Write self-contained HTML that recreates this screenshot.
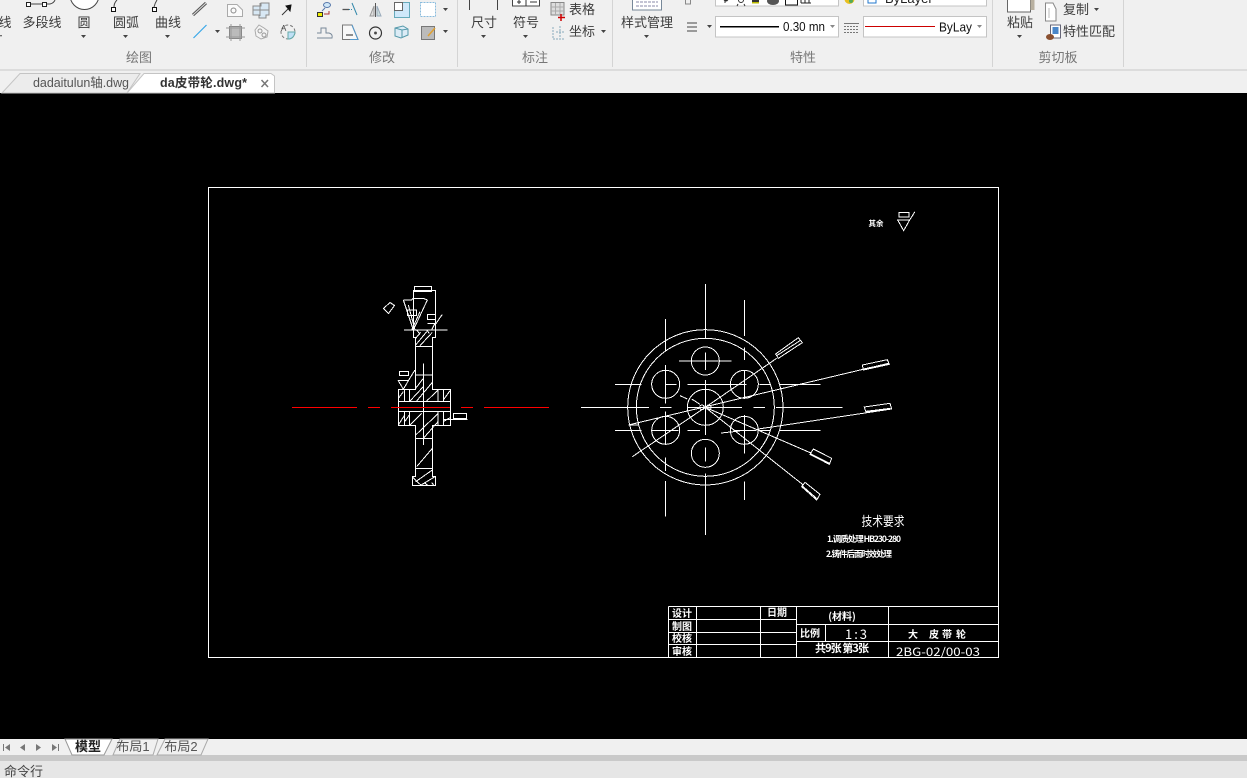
<!DOCTYPE html>
<html><head><meta charset="utf-8"><style>
html,body{margin:0;padding:0;background:#000;width:1247px;height:778px;overflow:hidden}
svg{display:block;position:absolute;left:0;top:0}
text{font-family:"Liberation Sans","Noto Sans CJK SC",sans-serif}
.l{font-size:13px;fill:#3c3c3c;text-anchor:middle}
.g{font-size:13px;fill:#777;text-anchor:middle}
.c{font-family:"Noto Sans CJK SC","Liberation Sans",sans-serif;fill:#fff;text-anchor:middle;font-weight:700}
</style></head><body>
<svg width="1247" height="778" viewBox="0 0 1247 778" xmlns="http://www.w3.org/2000/svg">
<rect width="1247" height="778" fill="#000"/>
<rect width="1247" height="70" fill="#f0f0f0"/>
<rect y="69" width="1247" height="2" fill="#dcdcdc"/>
<rect y="71" width="1247" height="22" fill="#f0f0f0"/>
<g fill="#d4d4d4"><rect x="306" y="0" width="1" height="67"/><rect x="457" y="0" width="1" height="67"/><rect x="612" y="0" width="1" height="67"/><rect x="992" y="0" width="1" height="67"/><rect x="1123" y="0" width="1" height="67"/></g>

<!-- labels -->
<text class="l" x="5" y="27">线</text><text class="l" x="42" y="27">多段线</text><text class="l" x="84" y="27">圆</text><text class="l" x="126" y="27">圆弧</text><text class="l" x="168" y="27">曲线</text>
<text class="l" x="484" y="27">尺寸</text><text class="l" x="526" y="27">符号</text><text class="l" x="582" y="14">表格</text><text class="l" x="582" y="36">坐标</text><text class="l" x="647" y="27">样式管理</text>
<text class="l" x="1020" y="27">粘贴</text><text class="l" x="1076" y="14">复制</text><text class="l" x="1089" y="36">特性匹配</text>
<text class="g" x="139" y="62">绘图</text><text class="g" x="382" y="62">修改</text><text class="g" x="535" y="62">标注</text><text class="g" x="803" y="62">特性</text><text class="g" x="1058" y="62">剪切板</text>

<!-- dropdown arrows -->
<g fill="#444"><path d="M81 35h5l-2.500 3z"/><path d="M123 35h5l-2.500 3z"/><path d="M165 35h5l-2.500 3z"/><path d="M215 30h5l-2.500 3z"/><path d="M443 8h5l-2.500 3z"/><path d="M443 30h5l-2.500 3z"/><path d="M481 35h5l-2.500 3z"/><path d="M523 35h5l-2.500 3z"/><path d="M601 30h5l-2.500 3z"/><path d="M644 35h5l-2.500 3z"/><path d="M707 25h5l-2.500 3z"/><path d="M1017 35h5l-2.500 3z"/><path d="M1094 8h5l-2.500 3z"/><path d="M0 35h2l-1 2z"/></g>

<!-- draw icons -->
<g fill="none" stroke="#444">
<path d="M30 4H42M46 4H50Q54 3 55 0"/><rect x="26.500" y="2.500" width="4" height="4" fill="#fff" stroke="#222"/><rect x="42.500" y="2.500" width="4" height="4" fill="#fff" stroke="#222"/>
<circle cx="84.500" cy="-5" r="14.500" fill="#fff"/>
<path d="M114 7Q114 3 117 0M154 7Q155 3 157 0"/><rect x="111.500" y="7.500" width="4" height="4" fill="#fff" stroke="#111"/><rect x="152.500" y="7.500" width="4" height="4" fill="#fff" stroke="#111"/>
<path d="M193 15L206 3" stroke="#555" stroke-width="3"/><path d="M193 15L206 3" stroke="#ddd" stroke-width="1"/>
<path d="M193.500 38L206.500 25" stroke="#38a8e8" stroke-width="1.200"/>
<path d="M227.500 4.500H237L242.500 10V16.500H227.500Z" stroke="#aaa" fill="#fafafa"/><circle cx="233.500" cy="10.500" r="2.500" stroke="#888"/>
<path d="M253 6H261V3H269V15H266V18H259V15H253Z" stroke="#8a8a8a" fill="#d8e8f4"/><path d="M253 10H269M260 3V16" stroke="#8a8a8a"/>
<path d="M282 15L288 9" stroke="#333"/><path d="M286 6L291 5L290 11Z" fill="#111" stroke="#111"/>
<rect x="229.500" y="26.500" width="12" height="12" fill="#bbb" stroke="#888"/><path d="M226 28H245M226 37H245M231 24V41M240 24V41" stroke="#999"/>
<path d="M255 30L259 25L264 28L268 31L267 37L261 39L256 36Z" stroke="#aaa" fill="#f4f4f4"/><circle cx="260" cy="31" r="2" stroke="#999"/><circle cx="264" cy="35" r="2" stroke="#999"/>
<circle cx="288" cy="32" r="7" stroke="#777" stroke-dasharray="3 2"/><path d="M288 32H295Q294 39 288 39Z" fill="#bfe0f5" stroke="#6aa"/>
</g>
<text x="281" y="31" font-size="8" fill="#444">A</text>

<!-- modify icons -->
<g fill="none" stroke="#555">
<rect x="317.500" y="12.500" width="5" height="4" fill="#ee0" stroke="#333"/><ellipse cx="327" cy="5" rx="3.500" ry="2.500" fill="#cfe6f7" stroke="#57a"/><path d="M324 14H329V11" stroke="#a33"/><path d="M322 11L325 8" stroke="#57a"/>
<path d="M342.500 9.500H349" stroke="#555" stroke-width="1.300"/><path d="M349 9.500H353" stroke="#38a" stroke-dasharray="1 1"/><path d="M352 3L357 15" stroke="#38a"/>
<path d="M375.500 3V17" stroke="#555"/><path d="M374 6L370 16H374Z" fill="#ddd" stroke="#999"/><path d="M377 6L381 16H377Z" fill="#cdd" stroke="#9ab"/>
<rect x="394.500" y="2.500" width="15" height="15" fill="#cfe8fa" stroke="#6ab"/><rect x="394.500" y="2.500" width="8" height="8" fill="#fff" stroke="#666"/>
<rect x="420.500" y="2.500" width="15" height="14" fill="#fff" stroke="#8bd" stroke-dasharray="2 1"/>
<path d="M317 38H332Q333 34 329 33H326V28H321V33H317" stroke="#789"/>
<path d="M342.500 39.500V25H352L358 39.500Z" fill="#f8f8f8" stroke="#777"/><path d="M346 35H353" stroke="#222"/><path d="M352 25L358 39.500H350" stroke="#59c"/>
<circle cx="375.500" cy="33" r="6" stroke="#333" stroke-width="1.200"/><circle cx="375.500" cy="33" r="1" fill="#333"/>
<path d="M395 28L403 26L408 29V35L401 38L395 36Z" stroke="#59a" fill="#dcecf6"/><path d="M402 30V37M395 28L402 30L408 29" stroke="#59a"/>
<rect x="421.500" y="26.500" width="13" height="13" fill="#bbb" stroke="#777"/><path d="M428 36L435 28" stroke="#e0a030" stroke-width="1.500"/>
</g>

<!-- annotation icons -->
<g fill="none" stroke="#444">
<path d="M469.500 0V10M497.500 0V10"/>
<rect x="512.500" y="-3" width="27" height="9" fill="#fff"/><path d="M526 -3V6M519 0V4M517 2H521M530 2H537" stroke="#333"/>
<rect x="551" y="2.500" width="13" height="12.500" fill="#ddd" stroke="#888"/><path d="M551 7H564M551 11H564M555.500 3V15M560 3V15" stroke="#aaa"/><path d="M561 14V21M558 17.500H565" stroke="#c00" stroke-width="1.500"/>
<path d="M553 27V39M553 39H565M556 32H564M560 26V38" stroke="#8ab" stroke-dasharray="2 1"/>
<rect x="632.500" y="-6" width="29" height="16" fill="#fff" stroke="#789"/><path d="M636 2H658M636 6H658" stroke="#88a" stroke-dasharray="3 1"/>
<rect x="685.500" y="-1" width="5" height="5" stroke="#888"/>
<path d="M687 23H697M687 27H697M687 31H697" stroke="#444"/>
<rect x="844" y="23" width="15" height="1" fill="#777" stroke="none"/><path d="M844 26.500H859M844 29.500H859M844 32.500H859" stroke="#777" stroke-dasharray="2 1"/>
</g>

<!-- property boxes -->
<g fill="#fff" stroke="#c4c4c4"><rect x="715.500" y="-8" width="123" height="14"/><rect x="863.500" y="-8" width="123" height="14"/><rect x="715.500" y="16.500" width="123" height="20.500"/><rect x="863.500" y="16.500" width="123" height="20.500"/></g>
<rect x="720" y="26" width="59" height="1.500" fill="#000"/><rect x="865" y="26" width="70" height="1" fill="#c00"/>
<text x="783" y="31" font-size="13" fill="#111" textLength="42" lengthAdjust="spacingAndGlyphs">0.30 mn</text>
<text x="939" y="31.500" font-size="13" fill="#111" textLength="33" lengthAdjust="spacingAndGlyphs">ByLay</text>
<g fill="#888"><path d="M830 25h5l-2.500 3z"/><path d="M977 25h5l-2.500 3z"/></g>
<g stroke="#333" fill="none"><path d="M725 -1V3"/><path d="M726 1a2 2 0 1 0-.1 0z" fill="#222"/><circle cx="741" cy="0" r="2.500"/><path d="M738 4L737 6M744 4L745 6"/></g>
<rect x="752" y="-1" width="7" height="3" fill="#333"/><rect x="752" y="2" width="7" height="1.500" fill="#bb0"/>
<ellipse cx="773" cy="1" rx="6" ry="4" fill="#555"/><rect x="785.500" y="-3" width="12" height="8" fill="#fff" stroke="#111"/>
<path d="M801 3V0M805 3V0M809 3V0M801 3H811" stroke="#222" fill="none"/>
<circle cx="849.500" cy="-1" r="5" fill="#e8c020"/><circle cx="851" cy="1" r="2" fill="#5a5"/>
<rect x="868" y="-3" width="8" height="6" fill="#fff" stroke="#27c"/>
<text x="885" y="3" font-size="13" fill="#222">ByLayer</text>

<!-- clipboard icons -->
<rect x="1007.500" y="-5" width="23" height="17" fill="#fff" stroke="#666"/><rect x="1030.500" y="-2" width="4" height="12" fill="#b8b0a0"/>
<path d="M1045.500 5.500V21H1056V9L1053 3H1045.500Z" fill="#fff" stroke="#888"/><path d="M1049 8V18" stroke="#bbb"/>
<rect x="1050.500" y="25" width="10" height="13" fill="#fff" stroke="#667"/><rect x="1052.500" y="27" width="6" height="7" fill="#4a86c8"/><ellipse cx="1050" cy="37" rx="4" ry="3" fill="#8a5030"/>

<!-- doc tabs -->
<path d="M2 93L20 73.500H140L127 93Z" fill="#ececec" stroke="#c4c4c4"/>
<path d="M127 93L144 73.500H271L274.500 76V93Z" fill="#fff" stroke="#c4c4c4"/>
<text x="33" y="87" font-size="12.500" fill="#555" textLength="96" lengthAdjust="spacing">dadaitulun轴.dwg</text>
<text x="160" y="87" font-size="12.500" font-weight="700" fill="#333" textLength="87" lengthAdjust="spacing">da皮带轮.dwg*</text>
<path d="M261.500 80L268 87M268 80L261.500 87" stroke="#777" stroke-width="1.500"/>

<!-- bottom -->
<rect y="739" width="1247" height="16" fill="#f0f0f0"/>
<rect y="755" width="1247" height="6" fill="#c9c9c9"/>
<rect y="761" width="1247" height="17" fill="#e6e6e6"/>
<g fill="#777"><rect x="3" y="744" width="1" height="7"/><path d="M10 744v7l-5-3.500z"/><path d="M25 744v7l-5-3.500z"/><path d="M36 744v7l5-3.500z"/><path d="M52 744v7l5-3.500z"/><rect x="58" y="744" width="1" height="7"/></g>
<path d="M65 739L72 755H104L112 739Z" fill="#fff" stroke="#999"/>
<path d="M113 755L120 739H150L158 739L153 755Z" fill="#f0f0f0" stroke="#aaa"/>
<path d="M157 755L165 739H208L201 755Z" fill="#f0f0f0" stroke="#aaa"/>
<text class="l" x="88" y="751" font-weight="700" style="fill:#222">模型</text><text class="l" x="133" y="751" style="fill:#555">布局1</text><text class="l" x="181" y="751" style="fill:#555">布局2</text>
<text x="4" y="776" font-size="13" fill="#444">命令行</text>

<!-- drawing frame -->
<g fill="none" stroke="#fff" shape-rendering="crispEdges">
<rect x="208.500" y="187.500" width="790" height="470"/>
<path d="M668.500 606.500V657M668.500 606.500H998M668 619.500H796M668 632.500H796M668 644.500H796M696.500 606.500V657M760.500 606.500V657M796.500 606.500V657M888.500 606.500V657M796 624.500H998M796 641.500H998M825.500 624.500V641.500"/>
</g>
<g fill="#fff" text-anchor="middle">
<text class="c" x="682" y="617" font-size="10">设计</text><text class="c" x="682" y="630" font-size="10">制图</text><text class="c" x="682" y="642" font-size="10">校核</text><text class="c" x="682" y="655" font-size="10">审核</text>
<text class="c" x="777" y="616" font-size="10">日期</text><text class="c" x="842" y="620" font-size="10">(材料)</text><text class="c" x="810" y="637" font-size="10">比例</text>
<text class="c" x="856" y="639" font-size="13" style="font-weight:400" textLength="22" lengthAdjust="spacing">1:3</text>
<text class="c" x="913 934 947 961" y="638" font-size="10" text-anchor="middle">大皮带轮</text>
<text class="c" x="842" y="652" font-size="11" textLength="54" lengthAdjust="spacing">共9张 第3张</text>
<text class="c" x="938" y="656" font-size="11.500" style="font-weight:400" textLength="84" lengthAdjust="spacingAndGlyphs">2BG-02/00-03</text>
<text class="c" x="883" y="526" font-size="13" style="font-weight:400" textLength="43" lengthAdjust="spacingAndGlyphs">技术要求</text>
<text class="c" x="864" y="542" font-size="8.500" textLength="74" lengthAdjust="spacing">1.调质处理 HB230-280</text>
<text class="c" x="859" y="557" font-size="8.500" textLength="66" lengthAdjust="spacing">2.铸件后面时效处理</text>
<text class="c" x="876" y="226" font-size="7.500">其余</text>
</g>
<g fill="none" stroke="#fff" shape-rendering="crispEdges" transform="translate(850 200) scale(.33333)" stroke-width="3">
<rect x="147" y="37" width="30" height="14"/><path d="M143 60H179L161 92ZM179 60L195 35"/>
</g>

<!-- left view -->
<g fill="none" stroke="#fff" stroke-width="3" shape-rendering="crispEdges" transform="translate(370 275) scale(.33333)">
<path d="M130 47H196V187H187V343H242V452H187V605H197V632H127V605H137V452H85V343H137V187H130Z"/>
<rect x="133" y="35" width="52" height="15"/>
<path d="M137 215H187M137 300H187M137 490H187M137 580H187M137 165H187M85 380H242M85 410H242M160 265V510"/>
<path d="M100 75L130 165L172 75M100 75H125L130 70H160L172 75M115 90L135 165M150 110L125 165"/>
<rect x="112" y="105" width="28" height="17"/><rect x="172" y="118" width="24" height="15"/>
<path d="M195 150L217 118M172 145H195L185 165M102 165H233"/>
<path d="M137 210L170 170M150 212L187 172M137 190L152 172"/>
<rect x="88" y="289" width="28" height="12"/><path d="M85 317H115L100 343ZM115 317L135 285"/>
<rect x="250" y="415" width="40" height="15"/><path d="M220 433H293"/>
<path d="M104 343V380M118 343V380M204 343V380M220 343V380M104 410V452M118 410V452M204 410V452M220 410V452"/>
<path d="M85 370L100 350M120 378L160 335M140 378L187 322M137 340L160 310M170 378L204 345M220 375L240 347"/>
<path d="M85 450L104 420M104 440L118 420M120 450L155 415M137 480L205 415M160 490L204 440M220 440L240 428M140 575L187 520M137 620L187 585M150 632L195 605"/>
<path d="M127 605L137 615L147 625L155 632M165 625L175 632M185 622L192 632M140 165L150 178M170 165L178 175"/>
</g>
<g fill="none" stroke="#fff" shape-rendering="crispEdges"><path d="M383.500 308.500L390 302.500L394.500 305.500L388.500 313.500Z"/></g>
<g fill="#f00"><rect x="292" y="407" width="65" height="1"/><rect x="368" y="407" width="12" height="1"/><rect x="391" y="407" width="59" height="1"/><rect x="461" y="407" width="12" height="1"/><rect x="484" y="407" width="65" height="1"/></g>

<!-- right view -->
<g fill="none" stroke="#fff" stroke-width="3" transform="translate(600 275) scale(.33333)" shape-rendering="crispEdges">
<circle cx="316" cy="397" r="233"/><circle cx="316" cy="397" r="207"/><circle cx="316" cy="397" r="54"/>
<circle cx="316" cy="258" r="42"/><circle cx="197" cy="328" r="42"/><circle cx="433" cy="328" r="42"/><circle cx="197" cy="466" r="42"/><circle cx="433" cy="466" r="42"/><circle cx="316" cy="535" r="42"/>
<circle cx="306" cy="397" r="7"/><circle cx="326" cy="397" r="7"/>
<path d="M316 27V190M316 232V285M316 315V480M316 518V560M316 595V780"/>
<path d="M197 132V230M197 270V385M197 410V510M197 548V588M197 618V725"/>
<path d="M433 75V183M433 218V255M433 285V370M433 420V535M433 620V675"/>
<path d="M-57 397H147M180 397H215M262 397H426M460 397H495M528 397H728"/>
<path d="M45 328H125M195 328H230M263 328H440M478 328H510M540 328H662"/>
<path d="M45 466H125M155 466H235M263 466H300M400 466H470M478 466H510M540 466H662"/>
<path d="M237 258H395"/>
<path d="M97 545L316 397L530 250M85 450L865 265M85 450H115M475 462L875 402M316 397L635 535M316 397L610 630M363 474L420 468M240 362L262 372M275 372L300 388"/>
<path d="M527 237L595 188L607 203L535 250ZM530 242L600 197"/>
<path d="M787 270L862 254L868 268L790 285ZM790 282L865 266"/>
<path d="M793 396L870 385L875 402L798 412ZM798 409L872 400"/>
<path d="M640 522L695 550L688 568L630 538ZM632 537L688 565"/>
<path d="M615 622L660 658L650 675L605 635ZM607 633L652 672"/>
</g>
</svg>
</body></html>
